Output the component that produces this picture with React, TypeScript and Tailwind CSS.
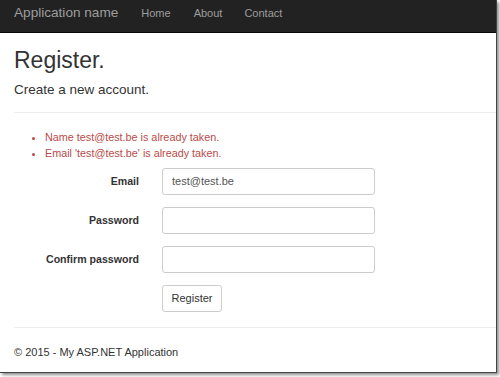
import React from "react";

export default function App() {
  return (
    <div className="w-[500px] h-[377px] bg-white overflow-hidden" style={{ fontFamily: '"Liberation Sans", Arial, sans-serif' }}>
      <div className="w-[497px] h-[373px] bg-white border-r border-b border-[#444] shadow-[2px_2px_3px_rgba(0,0,0,0.45)] flex flex-col overflow-hidden">
        <div className="h-[33px] bg-[#222] border-b border-[#080808] flex items-start pt-[4px] shrink-0">
          <span className="ml-[14px] text-[13.6px] leading-[18px] text-[#9d9d9d]">Application name</span>
          <span className="ml-[23px] text-[11px] leading-[18px] text-[#9d9d9d]">Home</span>
          <span className="ml-[23px] text-[11px] leading-[18px] text-[#9d9d9d]">About</span>
          <span className="ml-[22px] text-[11px] leading-[18px] text-[#9d9d9d]">Contact</span>
        </div>
        <div className="pl-[14px] text-[#333]">
          <h2 className="text-[23px] leading-[28px] mt-[13px]">Register.</h2>
          <h4 className="text-[13.5px] leading-[16px] mt-[8px]">Create a new account.</h4>
          <div className="h-px bg-[#eee] mt-[14px]" />
          <ul className="mt-[16px] pl-[31px] list-disc text-[10.8px] leading-[16px] text-[#b94a48]">
            <li>Name test@test.be is already taken.</li>
            <li>Email 'test@test.be' is already taken.</li>
          </ul>
          <div className="mt-[7px] flex flex-col gap-[12px]">
            <div className="flex items-center">
              <label className="w-[125px] text-right font-bold text-[10.6px]">Email</label>
              <div className="ml-[23px] w-[213px] h-[27px] border border-[#ccc] rounded-[3px] flex items-center pl-[9px] text-[11px] text-[#555]">test@test.be</div>
            </div>
            <div className="flex items-center">
              <label className="w-[125px] text-right font-bold text-[10.6px]">Password</label>
              <div className="ml-[23px] w-[213px] h-[27px] border border-[#ccc] rounded-[3px]" />
            </div>
            <div className="flex items-center">
              <label className="w-[125px] text-right font-bold text-[10.6px]">Confirm password</label>
              <div className="ml-[23px] w-[213px] h-[27px] border border-[#ccc] rounded-[3px]" />
            </div>
            <div className="flex items-center">
              <div className="w-[125px]" />
              <div className="ml-[23px] w-[60px] h-[27px] border border-[#ccc] rounded-[3px] flex items-center justify-center text-[11px] text-[#333]">Register</div>
            </div>
          </div>
          <div className="h-px bg-[#eee] mt-[15px]" />
          <div className="mt-[16px] text-[11px] text-[#333]">© 2015 - My ASP.NET Application</div>
        </div>
      </div>
    </div>
  );
}
